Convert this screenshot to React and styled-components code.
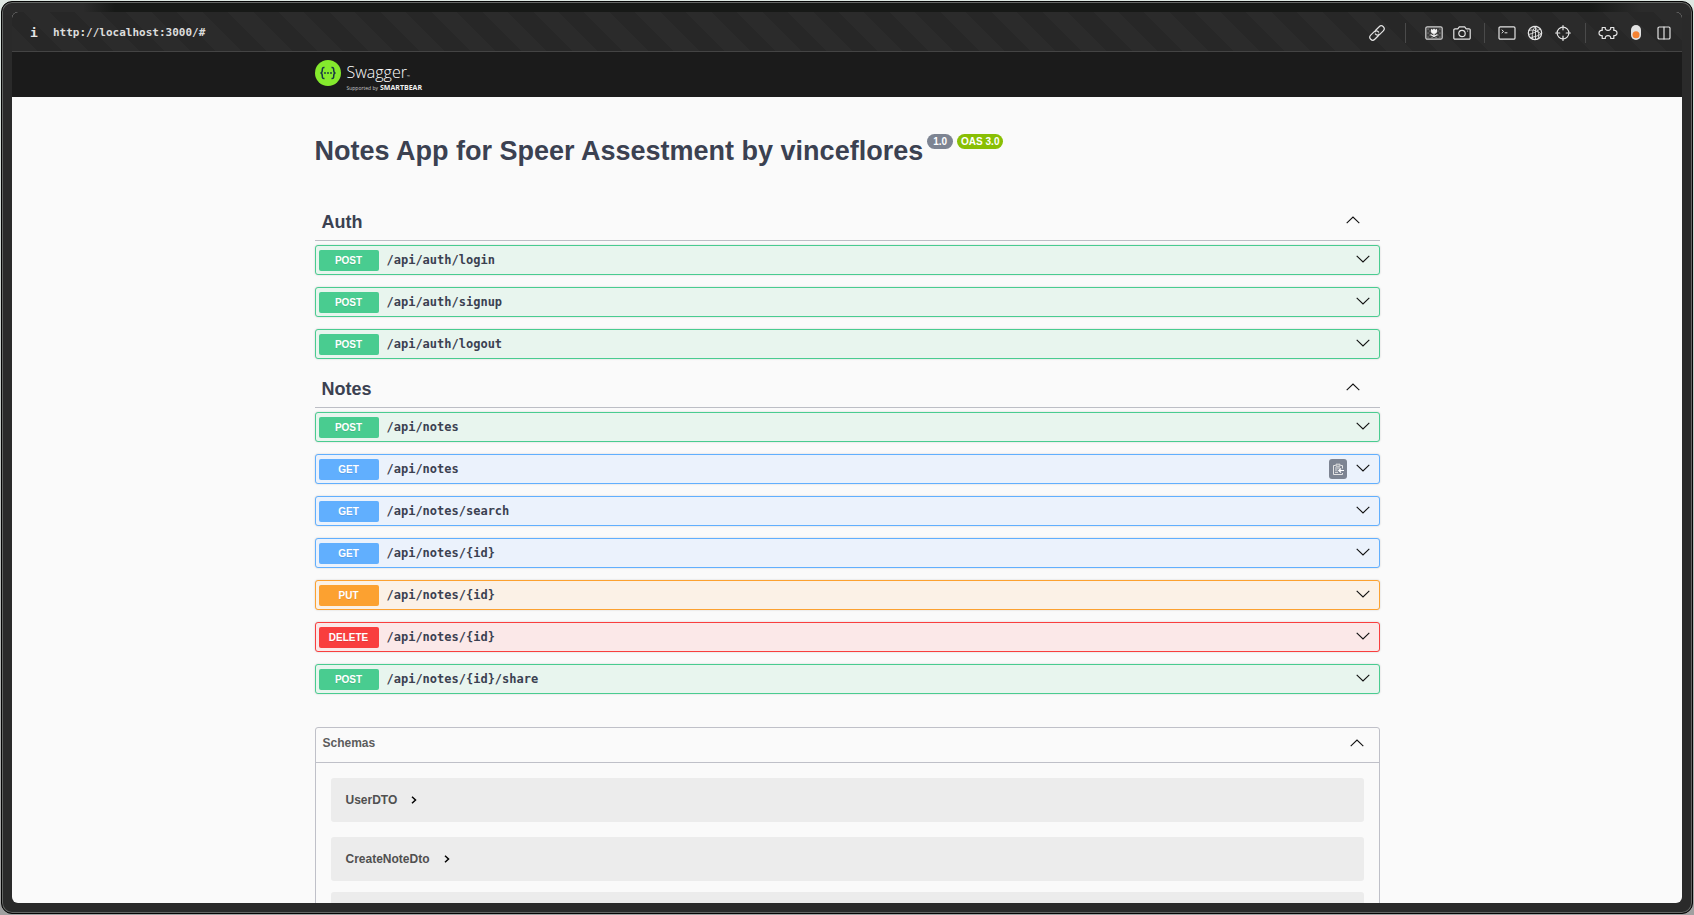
import React from "react";
import styled, { createGlobalStyle } from "styled-components";

const sans = '"Liberation Sans", Arial, sans-serif';
const mono = '"DejaVu Sans Mono", monospace';

const palette = {
  POST: { main: "#49cc90", tint: "#e8f5ee" },
  GET: { main: "#61affe", tint: "#ebf2fc" },
  PUT: { main: "#fca130", tint: "#fbf1e6" },
  DELETE: { main: "#f93e3e", tint: "#fbe8e8" },
};

const GlobalStyle = createGlobalStyle`
  *, *::before, *::after { box-sizing: border-box; }
  body {
    margin: 0;
    background: linear-gradient(#dfe8e3, #a0a0a0);
    font-family: ${sans};
    color: #3b4151;
  }
  h1, h2, h3 { margin: 0; }
  button {
    margin: 0;
    padding: 0;
    border: 0;
    background: none;
    color: inherit;
    font: inherit;
    text-align: left;
    cursor: pointer;
  }
  svg { display: block; }
`;

const Desktop = styled.div`
  height: 100vh;
  padding: 1px;
`;

const BrowserFrame = styled.div`
  height: 100%;
  padding: 10px;
  border: 1px solid #050505;
  border-radius: 11px;
  box-shadow: inset 0 0 0 1px #646664;
  background:
    linear-gradient(90deg, #2b2b2b 80px, #171917 112px, #171917 calc(100% - 100px), #2b2b2b calc(100% - 50px)) 1px 1px / calc(100% - 2px) 12px no-repeat,
    #2a2a2a;
`;

const Viewport = styled.div`
  display: flex;
  flex-direction: column;
  height: 100%;
  overflow: hidden;
  border-radius: 6px;
  background: #fafafa;
`;

const AddressBar = styled.div`
  display: flex;
  flex: none;
  align-items: center;
  height: 40px;
  padding: 2px 4px 0 14px;
  border-bottom: 1px solid #444;
  background: repeating-linear-gradient(45deg, #2b2b2b 0 18px, #272727 18px 36px);
  color: #e4e4e4;
`;

const InfoButton = styled.button`
  width: 27px;
  padding-left: 4px;
  font: bold 13px/18px ${mono};
`;

const AddressInput = styled.input`
  flex: 1;
  min-width: 0;
  padding: 0;
  border: 0;
  outline: 0;
  background: none;
  color: #dcdcdc;
  font: bold 11px/18px ${mono};
`;

const Tools = styled.div`
  display: flex;
  align-items: center;
`;

const ToolButton = styled.button`
  display: grid;
  place-items: center;
  width: 28px;
  height: 28px;
`;

const Divider = styled.span`
  width: 1px;
  height: 20px;
  margin: 0 ${(p) => (p.$wide ? 14 : 8)}px;
  background: #4a4a4a;
`;

const Page = styled.div`
  flex: 1;
  min-height: 0;
  overflow: hidden;
`;

const Wrapper = styled.div`
  width: 100%;
  max-width: 1065px;
  margin: 0 auto;
`;

const TopBar = styled.header`
  height: 45px;
  padding-top: 8px;
  background: #1b1b1b;
`;

const Logo = styled.a`
  display: inline-flex;
  gap: 5px;
  color: #fff;
  text-decoration: none;
`;

const LogoText = styled.span`
  display: flex;
  flex-direction: column;
  padding-top: 3px;
  font-family: "Open Sans", sans-serif;
`;

const LogoName = styled.span`
  display: flex;
  align-items: baseline;
  height: 20px;
  font-size: 16px;
  font-weight: 300;
  line-height: 18px;
  small { font-size: 4px; line-height: 4px; }
`;

const LogoTagline = styled.span`
  display: flex;
  align-items: baseline;
  gap: 2px;
  font-size: 5px;
  line-height: 9px;
  color: #c8c8c8;
  strong { color: #f0f0f0; font-size: 7px; }
`;

const TitleRow = styled.div`
  display: flex;
  align-items: flex-start;
  gap: 4px;
  padding: 37px 0 36px;
`;

const Title = styled.h1`
  font-size: 27px;
  line-height: 34px;
`;

const Pill = styled.span`
  padding: 0 ${(p) => (p.$roomy ? 6 : 4)}px;
  border-radius: 8px;
  background: ${(p) => p.$color};
  color: #fff;
  font-size: 10px;
  font-weight: bold;
  line-height: 15px;
`;

const Tag = styled.section`
  margin-bottom: 12px;
`;

const TagHeader = styled.h2`
  margin-bottom: 4px;
  border-bottom: 1px solid #bcbec5;
`;

const TagToggle = styled.button`
  display: flex;
  align-items: center;
  justify-content: space-between;
  width: 100%;
  height: 36px;
  padding: 0 20px 0 7px;
  font-size: 18px;
  font-weight: bold;
  svg { margin-bottom: 4px; }
`;

const Operations = styled.div`
  display: flex;
  flex-direction: column;
  gap: 12px;
`;

const Operation = styled.div`
  display: flex;
  align-items: center;
  height: 30px;
  padding: 0 3px;
  border: 1px solid ${(p) => palette[p.$method].main};
  border-radius: 3px;
  background: ${(p) => palette[p.$method].tint};
  box-shadow: 0 0 2px rgba(0, 0, 0, 0.19);
`;

const OperationSummary = styled.button`
  display: flex;
  flex: 1;
  align-items: center;
  gap: 8px;
`;

const Method = styled.span`
  width: 60px;
  border-radius: 2px;
  background: ${(p) => palette[p.$method].main};
  color: #fff;
  font-size: 10px;
  font-weight: bold;
  line-height: 21px;
  text-align: center;
  text-shadow: 0 1px 0 rgba(0, 0, 0, 0.1);
`;

const Path = styled.span`
  font: bold 12px/20px ${mono};
`;

const CopyButton = styled.button`
  display: grid;
  place-items: center;
  width: 18px;
  height: 20px;
  border-radius: 3px;
  background: #7d8492;
`;

const ExpandButton = styled.button`
  padding: 4px 6px 6px 9px;
`;

const Schemas = styled.section`
  margin: 33px 0 22px;
  border: 1px solid #bfc0c8;
  border-radius: 3px;
`;

const SchemasHeader = styled.h3`
  border-bottom: 1px solid #bfc0c8;
`;

const SchemasToggle = styled.button`
  display: flex;
  align-items: center;
  justify-content: space-between;
  width: 100%;
  height: 34px;
  padding: 0 15px 5px 7px;
  color: #5c5c5c;
  font-size: 12px;
  font-weight: bold;
`;

const SchemaList = styled.div`
  padding: 0 15px 15px;
`;

const Schema = styled.div`
  margin-top: ${(p) => (p.$tight ? 11 : 15)}px;
  border-radius: 3px;
  background: #ececec;
`;

const SchemaToggle = styled.button`
  display: flex;
  align-items: center;
  gap: 14px;
  height: 44px;
  padding: 0 15px;
  color: #505050;
  font-size: 12px;
  font-weight: bold;
`;

const Chevron = ({ up }) => (
  <svg width="14" height="8" viewBox="0 0 14 8" fill="none" stroke="#111" strokeWidth="1.1" aria-hidden="true">
    <path d={up ? "M.7 7.2 7 1l6.3 6.2" : "M.7.8 7 7 13.3.8"} />
  </svg>
);

const SmallChevron = () => (
  <svg width="6" height="8" viewBox="0 0 6 8" fill="none" stroke="#000" strokeWidth="1.5" aria-hidden="true">
    <path d="M1 .8 4.5 4 1 7.2" />
  </svg>
);

const Icon = ({ w = 16, h = 16, children }) => (
  <svg width={w} height={h} viewBox={`0 0 ${w} ${h}`} fill="none" stroke="#e4e4e4" strokeWidth="1.2" strokeLinecap="round" strokeLinejoin="round" aria-hidden="true">
    {children}
  </svg>
);

const LinkIcon = () => (
  <Icon>
    <g transform="rotate(-45 8 8)">
      <path d="M8.500 10.200A3 3 0 0 1 7 10.900H2A2.900 2.900 0 0 1 2 5.100H7A2.900 2.900 0 0 1 9.800 8.500" />
      <path d="M7.500 5.800A3 3 0 0 1 9 5.100H14A2.900 2.900 0 0 1 14 10.900H9A2.900 2.900 0 0 1 6.200 7.500" />
    </g>
  </Icon>
);

const PictureIcon = () => (
  <Icon w={18} h={14}>
    <rect x=".8" y=".8" width="16.4" height="12.4" rx="1.500" fill="#3c3c3c" stroke="#cfcfcf" />
    <path d="M3 3h.1M5 5h.1M3 7h.1M5 9h.1M3 11h.1M15 3h-.1M13 5h-.1M15 7h-.1M13 9h-.1M15 11h-.1M7 11.500h.1M11 11.500h.1" stroke="#a8a8a8" />
    <path d="M6 2.800 7.600 3.800 9 2.500l1.400 1.300L12 2.800v2.400C12 7 10.800 7.800 9 7.800S6 7 6 5.200Z" fill="#f4f4f4" stroke="none" />
    <path d="M9 7.500v3M6 8.800 9 10.500l3-1.700" stroke="#f4f4f4" />
  </Icon>
);

const CameraIcon = () => (
  <Icon w={18} h={14}>
    <path d="M2 2.800h2.800L6.300.8h5.400l1.500 2H16a1.200 1.200 0 0 1 1.200 1.200v8a1.200 1.200 0 0 1-1.200 1.200H2A1.200 1.200 0 0 1 .8 12V4A1.200 1.200 0 0 1 2 2.800Z" />
    <circle cx="9" cy="7.500" r="3.200" />
    <path d="M14.500 5h.1" />
  </Icon>
);

const TerminalIcon = () => (
  <Icon w={18} h={14}>
    <rect x="1" y=".8" width="16" height="12.400" rx="1.300" />
    <path d="m4 4 1.600 1.400L4 6.800M7 6.800h2" strokeWidth="1" />
  </Icon>
);

const GlobeIcon = () => (
  <Icon>
    <circle cx="8" cy="8" r="6.700" />
    <path d="M9 1.300C5 4 4.500 11 6 14.500M7 1.500c4 2.500 6 8 4 12.300M2 5.500c4-1.500 8 .5 12.500 3.500M1.500 9.500c4-1 8-2.500 11.500-5.500M3.500 12.500C7 12 11.500 11 14 9M8.500 1.500v13" strokeWidth=".9" />
  </Icon>
);

const CrosshairIcon = () => (
  <Icon>
    <circle cx="8" cy="8" r="5.900" />
    <path d="M8 .6v4.200M8 11.200v4.200M.6 8h4.200M11.200 8h4.200" />
  </Icon>
);

const PuzzleIcon = () => (
  <Icon w={20} h={14}>
    <path d="M4.200 1.500h3.100c-.4 1.900.9 2.800 2.700 2.800s3.100-.9 2.700-2.800h3.100v3c2-.5 3.200.8 3.200 2.500s-1.200 3-3.200 2.500v3h-3.100c.4-1.900-.9-2.800-2.700-2.800s-3.100.9-2.700 2.800H4.200v-3C2.200 10 1 8.700 1 7s1.200-3 3.200-2.500Z" />
  </Icon>
);

const ToggleIcon = () => (
  <Icon w={10} h={15}>
    <rect width="10" height="15" rx="5" fill="#e2e2e2" stroke="none" />
    <circle cx="5" cy="9.800" r="3.500" fill="#f58232" stroke="none" />
  </Icon>
);

const ColumnsIcon = () => (
  <Icon w={14} h={14}>
    <rect x="1" y="1" width="12" height="12" rx="1.300" />
    <path d="M7 1v12" />
  </Icon>
);

const ClipboardIcon = () => (
  <svg width="12" height="13" viewBox="0 0 12 13" fill="none" stroke="#e4e4e4" aria-hidden="true">
    <path d="M3.500 2.500h-2v9h9V10M10.500 5.500v-3h-2M3 5h5M3 7h2.500M3 9.300h3" />
    <path d="M4 1.200h4v2H4z" />
    <path d="M12 7.500H7m2-2L6.800 7.500 9 9.500" stroke="#fff" strokeWidth="1.200" />
  </svg>
);

const SwaggerMark = () => (
  <svg width="27" height="27" viewBox="0 0 27 27" fill="none" aria-hidden="true">
    <circle cx="13" cy="13" r="13" fill="#85ea2d" />
    <g stroke="#173647" strokeWidth="1.500">
      <path d="M9.500 7.500C7.300 7.300 7.300 8.300 7.300 10c0 1.900-.2 2.900-1.800 3 1.600.1 1.800 1.100 1.800 3 0 1.700 0 2.700 2.200 2.500" />
      <path d="M16.500 7.500c2.200-.2 2.200.8 2.200 2.500 0 1.900.2 2.900 1.800 3-1.600.1-1.800 1.100-1.800 3 0 1.700 0 2.700-2.200 2.500" />
    </g>
    <g fill="#173647">
      <circle cx="10" cy="13" r=".9" />
      <circle cx="13" cy="13" r=".9" />
      <circle cx="16" cy="13" r=".9" />
    </g>
  </svg>
);

const tags = [
  {
    name: "Auth",
    operations: [
      { method: "POST", path: "/api/auth/login" },
      { method: "POST", path: "/api/auth/signup" },
      { method: "POST", path: "/api/auth/logout" },
    ],
  },
  {
    name: "Notes",
    operations: [
      { method: "POST", path: "/api/notes" },
      { method: "GET", path: "/api/notes", copy: true },
      { method: "GET", path: "/api/notes/search" },
      { method: "GET", path: "/api/notes/{id}" },
      { method: "PUT", path: "/api/notes/{id}" },
      { method: "DELETE", path: "/api/notes/{id}" },
      { method: "POST", path: "/api/notes/{id}/share" },
    ],
  },
];

export default function App() {
  return (
    <Desktop>
      <GlobalStyle />
      <BrowserFrame>
        <Viewport>
          <AddressBar>
            <InfoButton aria-label="Site information">i</InfoButton>
            <AddressInput aria-label="Address" defaultValue="http://localhost:3000/#" />
            <Tools>
              <ToolButton aria-label="Copy link"><LinkIcon /></ToolButton>
              <Divider $wide />
              <ToolButton aria-label="Picture"><PictureIcon /></ToolButton>
              <ToolButton aria-label="Screenshot"><CameraIcon /></ToolButton>
              <Divider />
              <ToolButton aria-label="Console"><TerminalIcon /></ToolButton>
              <ToolButton aria-label="Network"><GlobeIcon /></ToolButton>
              <ToolButton aria-label="Inspect"><CrosshairIcon /></ToolButton>
              <Divider />
              <ToolButton aria-label="Extensions"><PuzzleIcon /></ToolButton>
              <ToolButton aria-label="Developer mode"><ToggleIcon /></ToolButton>
              <ToolButton aria-label="Split view"><ColumnsIcon /></ToolButton>
            </Tools>
          </AddressBar>
          <Page>
            <TopBar>
              <Wrapper>
                <Logo href="#">
                  <SwaggerMark />
                  <LogoText>
                    <LogoName>Swagger<small>™</small></LogoName>
                    <LogoTagline>Supported by <strong>SMARTBEAR</strong></LogoTagline>
                  </LogoText>
                </Logo>
              </Wrapper>
            </TopBar>
            <Wrapper as="main">
              <TitleRow>
                <Title>Notes App for Speer Assestment by vinceflores</Title>
                <Pill $color="#7d8492" $roomy>1.0</Pill>
                <Pill $color="#89bf04">OAS 3.0</Pill>
              </TitleRow>
              {tags.map((tag) => (
                <Tag key={tag.name}>
                  <TagHeader>
                    <TagToggle aria-expanded="true">{tag.name}<Chevron up /></TagToggle>
                  </TagHeader>
                  <Operations>
                    {tag.operations.map(({ method, path, copy }) => (
                      <Operation key={method + path} $method={method}>
                        <OperationSummary>
                          <Method $method={method}>{method}</Method>
                          <Path>{path}</Path>
                        </OperationSummary>
                        {copy && <CopyButton aria-label="Copy to clipboard"><ClipboardIcon /></CopyButton>}
                        <ExpandButton aria-label={`Expand ${method} ${path}`}><Chevron /></ExpandButton>
                      </Operation>
                    ))}
                  </Operations>
                </Tag>
              ))}
              <Schemas>
                <SchemasHeader>
                  <SchemasToggle aria-expanded="true">Schemas<Chevron up /></SchemasToggle>
                </SchemasHeader>
                <SchemaList>
                  <Schema><SchemaToggle>UserDTO<SmallChevron /></SchemaToggle></Schema>
                  <Schema><SchemaToggle>CreateNoteDto<SmallChevron /></SchemaToggle></Schema>
                  <Schema $tight><SchemaToggle aria-label="Schema" /></Schema>
                </SchemaList>
              </Schemas>
            </Wrapper>
          </Page>
        </Viewport>
      </BrowserFrame>
    </Desktop>
  );
}
